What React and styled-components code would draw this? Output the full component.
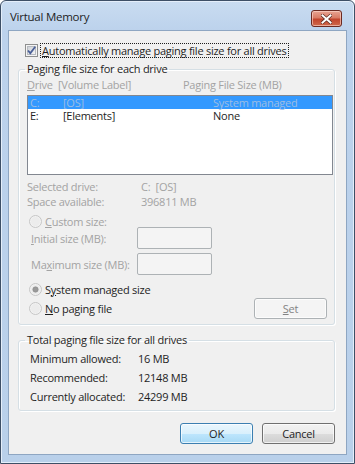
import React from 'react';
import styled, { createGlobalStyle } from 'styled-components';

const Global = createGlobalStyle`
  html, body {
    margin: 0;
    padding: 0;
    background: #ffffff;
  }
  body {
    font-family: "Open Sans", "Noto Sans", sans-serif;
    font-size: 11px;
    letter-spacing: -0.25px;
    color: #1e1e1e;
  }
`;

const Window = styled.div`
  box-sizing: border-box;
  width: 355px;
  height: 464px;
  border: 1px solid #3d4f66;
  border-radius: 6px 6px 0 0;
  background: linear-gradient(180deg, #c9dcf1 0px, #bcd2ec 30px, #b9d0ea 100%);
  padding: 0 7px 8px 7px;
  display: flex;
  flex-direction: column;
  box-shadow: inset 0 0 0 1px #e4eefa;
`;

const TitleBar = styled.div`
  height: 29px;
  display: flex;
  justify-content: space-between;
  align-items: flex-start;
`;

const Title = styled.span`
  margin: 9px 0 0 2px;
  line-height: 14px;
  font-size: 11.5px;
  color: #1e1e1e;
`;

const CloseButton = styled.button`
  box-sizing: border-box;
  width: 31px;
  height: 17px;
  margin: 9px 5px 0 0;
  padding: 0;
  border: 1px solid #6b2a22;
  border-radius: 3px;
  background: linear-gradient(180deg, #e8a493 0%, #d97c66 45%, #c2452d 55%, #cf6a4d 100%);
  box-shadow: inset 0 0 0 1px rgba(255, 220, 210, 0.6);
  display: flex;
  align-items: center;
  justify-content: center;
`;

const Client = styled.div`
  flex: 1;
  background: #f0f0f0;
  border: 1px solid #8ea6c2;
  display: flex;
  flex-direction: column;
`;

const CheckRow = styled.div`
  height: 16px;
  margin: 11px 0 0 16px;
  display: flex;
  align-items: center;
  gap: 3px;
`;

const Focus = styled.span`
  outline: 1px dotted #1e1e1e;
  padding: 0 1px;
  line-height: 13px;
`;

const Key = styled.span`
  text-decoration: underline;
`;

const Group = styled.fieldset`
  margin: ${(p) => p.$top}px 11px 0 9px;
  padding: ${(p) => p.$pad};
  border: 1px solid #d5dfe5;
  border-radius: 3px;
  box-shadow: inset 1px 1px 0 #ffffff, 1px 1px 0 #ffffff;
  min-width: 0;
`;

const Legend = styled.legend`
  padding: 0 2px;
  margin-left: -2px;
  line-height: 14px;
  color: #1e1e1e;
`;

const Header = styled.div`
  height: 14px;
  margin-top: 2px;
  display: grid;
  grid-template-columns: 31px 125px 1fr;
  line-height: 14px;
  color: #a3a3a3;
`;

const ListBox = styled.div`
  box-sizing: border-box;
  height: 80px;
  margin: 3px 1px 0 0;
  border: 1px solid #828790;
  background: #ffffff;
`;

const ListRow = styled.div`
  height: 13px;
  line-height: 13px;
  display: grid;
  grid-template-columns: 33px 150px 1fr;
  padding-left: 2px;
  background: ${(p) => (p.$selected ? '#3399ff' : 'transparent')};
  color: ${(p) => (p.$selected ? '#9dbde3' : '#1e1e1e')};
`;

const InfoRow = styled.div`
  height: 15px;
  line-height: 15px;
  display: grid;
  grid-template-columns: 114px 1fr;
  color: #a3a3a3;
  margin-top: ${(p) => p.$top || 0}px;
`;

const RadioRow = styled.div`
  height: ${(p) => p.$h}px;
  margin-top: ${(p) => p.$top || 0}px;
  padding-left: 2px;
  display: flex;
  align-items: center;
  gap: 3px;
  color: ${(p) => (p.$dim ? '#a3a3a3' : '#1e1e1e')};
`;

const Spacer = styled.div`
  flex: 1;
`;

const SizeRow = styled.div`
  height: 22px;
  margin-top: ${(p) => p.$top || 0}px;
  padding-left: 4px;
  display: grid;
  grid-template-columns: 106px 75px;
  align-items: center;
  color: #a3a3a3;
`;

const TextBox = styled.div`
  box-sizing: border-box;
  height: 22px;
  border: 1px solid #adb2b5;
  border-radius: 2px;
  background: #f4f4f4;
`;

const PushButton = styled.button`
  box-sizing: border-box;
  width: 73px;
  height: 21px;
  padding: 0;
  font: inherit;
  letter-spacing: inherit;
  border-radius: 3px;
  border: 1px solid ${(p) => (p.$primary ? '#3c7fb1' : p.$disabled ? '#adb2b5' : '#707070')};
  color: ${(p) => (p.$disabled ? '#838383' : '#1e1e1e')};
  background: ${(p) =>
    p.$disabled
      ? '#f4f4f4'
      : p.$primary
      ? 'linear-gradient(180deg, #eaf6fd 0%, #d9f0fc 50%, #bee6fd 51%, #a7d9f5 100%)'
      : 'linear-gradient(180deg, #f2f2f2 0%, #ebebeb 50%, #dddddd 51%, #cfcfcf 100%)'};
  box-shadow: inset 0 0 0 1px rgba(255, 255, 255, 0.7);
  margin-right: ${(p) => p.$right || 0}px;
`;

const TotalRow = styled.div`
  height: 19px;
  line-height: 19px;
  padding-left: 3px;
  display: grid;
  grid-template-columns: 108px 1fr;
`;

const Buttons = styled.div`
  margin: 12px 11px 0 0;
  display: flex;
  justify-content: flex-end;
  gap: 9px;
`;

const Checkbox = () => (
  <svg width="13" height="13" viewBox="0 0 13 13">
    <defs>
      <linearGradient id="cbg" x1="0" y1="0" x2="1" y2="1">
        <stop offset="0" stopColor="#cbcfd5" />
        <stop offset="1" stopColor="#f6f6f6" />
      </linearGradient>
    </defs>
    <rect x="0.5" y="0.5" width="12" height="12" fill="#f4f4f4" stroke="#8e8f8f" />
    <rect x="2.5" y="2.5" width="8" height="8" fill="url(#cbg)" stroke="#b6bac0" />
    <path d="M3 6.5 L5.3 9.2 L10.2 2.8" fill="none" stroke="#4a5f97" strokeWidth="1.8" />
  </svg>
);

const Radio = ({ checked }) => (
  <svg width="13" height="13" viewBox="0 0 13 13">
    <circle cx="6.5" cy="6.5" r="6" fill="#f2f2f2" stroke="#c6c6c6" />
    <circle cx="6.5" cy="6.5" r="4.5" fill="#ececec" />
    {checked && <circle cx="6.5" cy="6.5" r="2.7" fill="#9a9a9a" stroke="#8a8a8a" strokeWidth="0.6" />}
  </svg>
);

const CloseGlyph = () => (
  <svg width="11" height="10" viewBox="0 0 11 10">
    <path d="M1.5 1.5 L9.5 8.5 M9.5 1.5 L1.5 8.5" stroke="#5a2a22" strokeWidth="3.4" strokeLinecap="square" />
    <path d="M1.5 1.5 L9.5 8.5 M9.5 1.5 L1.5 8.5" stroke="#ffffff" strokeWidth="2" strokeLinecap="square" />
  </svg>
);

const drives = [
  { drive: 'C:', label: '[OS]', size: 'System managed', selected: true },
  { drive: 'E:', label: '[Elements]', size: 'None' },
];

const totals = [
  ['Minimum allowed:', '16 MB'],
  ['Recommended:', '12148 MB'],
  ['Currently allocated:', '24299 MB'],
];

export default function App() {
  return (
    <>
      <Global />
      <Window>
        <TitleBar>
          <Title>Virtual Memory</Title>
          <CloseButton aria-label="Close">
            <CloseGlyph />
          </CloseButton>
        </TitleBar>
        <Client>
          <CheckRow>
            <Checkbox />
            <Focus>
              <Key>A</Key>utomatically manage paging file size for all drives
            </Focus>
          </CheckRow>

          <Group $top={4} $pad="0 0 6px 8px">
            <Legend>Paging file size for each drive</Legend>
            <Header>
              <span>
                <Key>D</Key>rive
              </span>
              <span>[Volume Label]</span>
              <span>Paging File Size (MB)</span>
            </Header>
            <ListBox>
              {drives.map((d) => (
                <ListRow key={d.drive} $selected={d.selected}>
                  <span>{d.drive}</span>
                  <span>{d.label}</span>
                  <span>{d.size}</span>
                </ListRow>
              ))}
            </ListBox>
            <InfoRow $top={4}>
              <span>Selected drive:</span>
              <span>C:&nbsp;&nbsp;[OS]</span>
            </InfoRow>
            <InfoRow>
              <span>Space available:</span>
              <span>396811 MB</span>
            </InfoRow>
            <RadioRow $h={12} $top={6} $dim>
              <Radio />
              <span>
                <Key>C</Key>ustom size:
              </span>
            </RadioRow>
            <SizeRow>
              <span>
                <Key>I</Key>nitial size (MB):
              </span>
              <TextBox />
            </SizeRow>
            <SizeRow $top={4}>
              <span>
                Ma<Key>x</Key>imum size (MB):
              </span>
              <TextBox />
            </SizeRow>
            <RadioRow $h={16} $top={6} $dim={false}>
              <Radio checked />
              <span>
                S<Key>y</Key>stem managed size
              </span>
            </RadioRow>
            <RadioRow $h={20} $top={1}>
              <Radio />
              <span>
                <Key>N</Key>o paging file
              </span>
              <Spacer />
              <PushButton $disabled $right={7}>
                <Key>S</Key>et
              </PushButton>
            </RadioRow>
          </Group>

          <Group $top={8} $pad="2px 0 4px 8px">
            <Legend>Total paging file size for all drives</Legend>
            {totals.map(([label, value]) => (
              <TotalRow key={label}>
                <span>{label}</span>
                <span>{value}</span>
              </TotalRow>
            ))}
          </Group>

          <Buttons>
            <PushButton $primary>OK</PushButton>
            <PushButton>Cancel</PushButton>
          </Buttons>
        </Client>
      </Window>
    </>
  );
}
